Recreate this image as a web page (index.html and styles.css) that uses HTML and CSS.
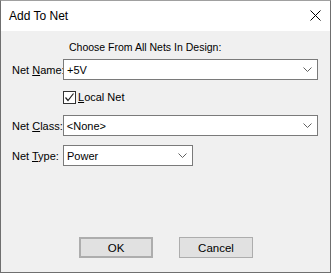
FILE: index.html
```html
<!DOCTYPE html>
<html lang="en">
<head>
    <meta charset="UTF-8">
    <title>Add To Net</title>
    <link rel="stylesheet" href="styles.css">
</head>
<body>
    <div class="window">
        <div class="titlebar">
            <span class="title">Add To Net</span>
            <svg class="close" width="11" height="11" viewBox="0 0 11 11">
                <path d="M0.5 0.5 L10.5 10.5 M10.5 0.5 L0.5 10.5" stroke="#000" stroke-width="1" fill="none"/>
            </svg>
        </div>

        <div class="content">
            <div class="hint">Choose From All Nets In Design:</div>

            <div class="row row-name">
                <span class="label">Net <u>N</u>ame:</span>
                <div class="combo wide">
                    <span>+5V</span>
                    <svg class="chev" width="9" height="5" viewBox="0 0 9 5"><path d="M0.5 0.5 L4.5 4.5 L8.5 0.5" stroke="#606060" fill="none"/></svg>
                </div>
            </div>

            <div class="row row-check">
                <span class="label"></span>
                <div class="check">
                    <span class="box">
                        <svg width="11" height="11" viewBox="0 0 11 11"><path d="M1.5 5.5 L4 8.5 L9.5 1.5" stroke="#202020" stroke-width="1.2" fill="none"/></svg>
                    </span>
                    <span><u>L</u>ocal Net</span>
                </div>
            </div>

            <div class="row row-class">
                <span class="label">Net <u>C</u>lass:</span>
                <div class="combo wide">
                    <span>&lt;None&gt;</span>
                    <svg class="chev" width="9" height="5" viewBox="0 0 9 5"><path d="M0.5 0.5 L4.5 4.5 L8.5 0.5" stroke="#606060" fill="none"/></svg>
                </div>
            </div>

            <div class="row row-type">
                <span class="label">Net <u>T</u>ype:</span>
                <div class="combo narrow">
                    <span>Power</span>
                    <svg class="chev" width="9" height="5" viewBox="0 0 9 5"><path d="M0.5 0.5 L4.5 4.5 L8.5 0.5" stroke="#606060" fill="none"/></svg>
                </div>
            </div>

            <div class="buttons">
                <div class="btn default">OK</div>
                <div class="btn">Cancel</div>
            </div>
        </div>
    </div>
</body>
</html>
```

FILE: styles.css
```css
* {
    margin: 0;
    padding: 0;
    box-sizing: border-box;
}

body {
    font-family: "Liberation Sans", Arial, sans-serif;
    font-size: 11px;
    color: #000;
    background: #f0f0f0;
}

.window {
    width: 331px;
    height: 273px;
    border: 1px solid #6f6f6f;
    border-top-color: #a0a0a0;
    display: flex;
    flex-direction: column;
    background: #f0f0f0;
}

.titlebar {
    height: 30px;
    background: #fff;
    display: flex;
    align-items: center;
    justify-content: space-between;
    padding: 0 9px 0 8px;
}

.title {
    font-size: 12px;
    padding-bottom: 1px;
}

.close {
    margin-bottom: 1px;
}

.content {
    flex: 1;
    display: flex;
    flex-direction: column;
    padding: 10px 12px 0 11px;
}

.hint {
    padding-left: 57px;
    height: 18px;
    line-height: 13px;
    font-size: 10.5px;
}

.row {
    display: flex;
    align-items: center;
}

.label {
    width: 51px;
    white-space: nowrap;
}

.combo {
    height: 21px;
    background: #fff;
    border: 1px solid #7a7a7a;
    display: flex;
    align-items: center;
    justify-content: space-between;
    padding: 0 5px 0 3px;
}

.combo.wide {
    width: 256px;
}

.combo.narrow {
    width: 130px;
}

.row-check {
    margin-top: 10px;
    height: 14px;
}

.check {
    display: flex;
    align-items: center;
    gap: 2px;
}

.box {
    width: 13px;
    height: 13px;
    border: 1px solid #333;
    background: #fff;
    display: flex;
    align-items: center;
    justify-content: center;
}

.row-class {
    margin-top: 11px;
}

.row-type {
    margin-top: 9px;
}

.buttons {
    margin-top: 71px;
    display: flex;
    gap: 26px;
    padding-left: 67px;
}

.btn {
    width: 74px;
    height: 21px;
    background: #e1e1e1;
    border: 1px solid #adadad;
    display: flex;
    align-items: center;
    justify-content: center;
    font-size: 11.5px;
}

.btn.default {
    border: 2px solid #adadad;
}
```
